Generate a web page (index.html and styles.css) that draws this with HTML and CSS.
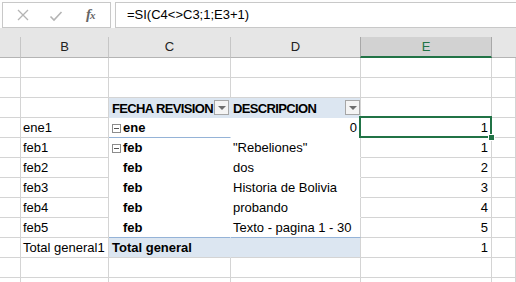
FILE: index.html
```html
<!DOCTYPE html>
<html>
<head>
<meta charset="utf-8">
<link rel="stylesheet" href="styles.css">
</head>
<body>
<div class="fbar">
  <div class="namebox">
    <svg class="ico" width="14" height="12" viewBox="0 0 14 12"><path d="M2 1 L12 11 M12 1 L2 11" stroke="#b4b4b4" stroke-width="1.3" fill="none"/></svg>
    <svg class="ico" width="14" height="12" viewBox="0 0 14 12"><path d="M1.5 6.5 L5 10 L12.5 2" stroke="#b4b4b4" stroke-width="1.6" fill="none"/></svg>
    <span class="fx">f<span class="fxx">x</span></span>
  </div>
  <div class="formula">=SI(C4&lt;&gt;C3;1;E3+1)</div>
</div>
<div class="gap"></div>
<div class="grid">
  <div class="hd"></div><div class="hd">B</div><div class="hd">C</div><div class="hd">D</div><div class="hd sel">E</div><div class="hd last"></div>

  <div class="c"></div><div class="c"></div><div class="c"></div><div class="c"></div><div class="c"></div><div class="c"></div>
  <div class="c"></div><div class="c"></div><div class="c"></div><div class="c"></div><div class="c"></div><div class="c"></div>

  <div class="c"></div><div class="c"></div>
  <div class="c ph pc"><span class="b hdtxt">FECHA REVISION</span><span class="dd c1"><span class="tri"></span></span></div>
  <div class="c ph pd"><span class="b hdtxt">DESCRIPCION</span><span class="dd"><span class="tri"></span></span></div>
  <div class="c"></div><div class="c"></div>

  <div class="c"></div><div class="c">ene1</div>
  <div class="c pc ene"><span class="box"></span><span class="b">ene</span></div>
  <div class="c pd num">0</div>
  <div class="c num active">1<span class="handle"></span></div><div class="c"></div>

  <div class="c"></div><div class="c">feb1</div>
  <div class="c pc"><span class="box"></span><span class="b">feb</span></div>
  <div class="c pd">"Rebeliones"</div>
  <div class="c num">1</div><div class="c"></div>

  <div class="c"></div><div class="c">feb2</div>
  <div class="c pc"><span class="ind b">feb</span></div>
  <div class="c pd">dos</div>
  <div class="c num">2</div><div class="c"></div>

  <div class="c"></div><div class="c">feb3</div>
  <div class="c pc"><span class="ind b">feb</span></div>
  <div class="c pd">Historia de Bolivia</div>
  <div class="c num">3</div><div class="c"></div>

  <div class="c"></div><div class="c">feb4</div>
  <div class="c pc"><span class="ind b">feb</span></div>
  <div class="c pd">probando</div>
  <div class="c num">4</div><div class="c"></div>

  <div class="c"></div><div class="c">feb5</div>
  <div class="c pc pre"><span class="ind b">feb</span></div>
  <div class="c pd pre">Texto - pagina 1 - 30</div>
  <div class="c num">5</div><div class="c"></div>

  <div class="c"></div><div class="c tg">Total general1</div>
  <div class="c pt pc"><span class="b">Total general</span></div>
  <div class="c pt pd"></div>
  <div class="c num">1</div><div class="c"></div>

  <div class="c"></div><div class="c"></div><div class="c"></div><div class="c"></div><div class="c"></div><div class="c"></div>
  <div class="c"></div><div class="c"></div><div class="c"></div><div class="c"></div><div class="c"></div><div class="c"></div>
</div>
</body>
</html>
```

FILE: styles.css
```css
* { box-sizing: border-box; }
html, body { margin: 0; padding: 0; }
body {
  width: 516px;
  height: 282px;
  overflow: hidden;
  background: #ffffff;
  font-family: "Liberation Sans", Arial, sans-serif;
  font-size: 13px;
  color: #000;
}
.fbar {
  height: 28px;
  background: #fdfdfd;
  display: flex;
  padding-top: 2px;
  gap: 4px;
}
.namebox {
  margin-left: 2px;
  width: 109px;
  height: 26px;
  border: 1px solid #c8c8c8;
  background: #fff;
  display: flex;
  align-items: center;
  padding-left: 13px;
}
.ico { display: block; }
.ico:first-child { margin-right: 19px; }
.ico:nth-child(2) { margin-right: 23px; margin-top: 1px; }
.fx {
  font-family: "Liberation Serif", serif;
  font-style: italic;
  font-weight: bold;
  font-size: 15px;
  color: #666;
  letter-spacing: -1px;
  margin-top: -2px;
}
.fxx { font-size: 11px; }
.formula {
  flex: 1;
  height: 26px;
  border: 1px solid #c8c8c8;
  border-right: none;
  background: #fff;
  padding-left: 11px;
  line-height: 24px;
}
.gap { height: 9px; background: #e6e6e6; }
.grid {
  display: grid;
  grid-template-columns: 21px 88px 122px 130px 131px 1fr;
  grid-auto-rows: 20px;
  grid-template-rows: 21px;
  height: 245px;
  overflow: hidden;
}
.hd {
  background: #e6e6e6;
  border-right: 1px solid #c6c6c6;
  border-bottom: 1px solid #b4b4b4;
  text-align: center;
  line-height: 20px;
  color: #222;
}
.hd.sel {
  background: #d2d2d2;
  color: #217346;
  border-left: 1px solid #a8a8a8;
  border-right: 1px solid #a8a8a8;
  border-bottom: 2px solid #217346;
  margin-left: -1px;
}
.hd.last { border-right: none; }
.c {
  border-right: 1px solid #d4d4d4;
  border-bottom: 1px solid #d4d4d4;
  padding: 1px 2px 0 2px;
  line-height: 18px;
  white-space: nowrap;
  overflow: visible;
}
.b { font-weight: bold; }
.pc { padding-left: 3px; border-right-color: transparent; border-bottom-color: transparent; }
.pd { border-bottom-color: transparent; }
.ph {
  background: #dce6f1;
  display: flex;
  align-items: center;
  justify-content: space-between;
  padding-top: 0;
  padding-right: 0;
}
.hdtxt { letter-spacing: -0.65px; line-height: 19px; padding-top: 1px; }
.dd {
  width: 15px;
  height: 15px;
  border: 1px solid #a6a6a6;
  background: #f4f4f4;
  display: flex;
  align-items: center;
  justify-content: center;
}
.dd.c1 { margin-right: 1px; }
.tri {
  width: 0; height: 0;
  border-left: 4px solid transparent;
  border-right: 4px solid transparent;
  border-top: 4px solid #6e6e6e;
}
.ene { border-bottom-color: #95b3d7; display: flex; align-items: center; }
.box {
  display: inline-block;
  width: 9px; height: 9px;
  border: 1px solid #8c8c8c;
  margin-right: 2px;
  margin-top: 1px;
  position: relative;
  background: #fff;
}
.box::after {
  content: "";
  position: absolute;
  left: 1px; right: 1px; top: 3px;
  height: 1px;
  background: #555;
}
.pc:not(.ene):not(.ph):not(.pt) { display: flex; align-items: center; }
.ind { padding-left: 11px; }
.pre { border-bottom-color: #95b3d7; }
.pt { background: #dce6f1; }
.pt.pc { border-right-color: transparent; }
.pt.pd { border-bottom-color: #d4d4d4; }
.pt.pc { border-bottom-color: #d4d4d4; }
.num { text-align: right; padding-right: 3px; }
.tg { overflow: visible; }
.active { position: relative; }
.active::before {
  content: "";
  position: absolute;
  left: -2px; top: -2px; right: -1px; bottom: -1px;
  border: 2px solid #217346;
}
.handle {
  position: absolute;
  right: -4px;
  bottom: -4px;
  width: 7px;
  height: 7px;
  background: #217346;
  border: 1px solid #fff;
  z-index: 2;
}
```
